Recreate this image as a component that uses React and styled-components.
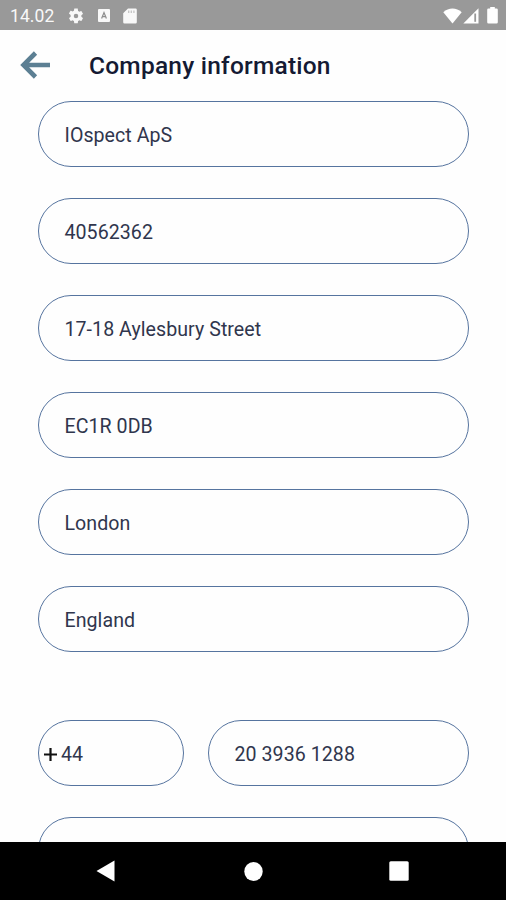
import styled, { createGlobalStyle } from "styled-components";

const GlobalStyle = createGlobalStyle`
  * {
    box-sizing: border-box;
  }
  body {
    margin: 0;
    background: #fefefe;
    font-family: Roboto, sans-serif;
  }
`;

const Screen = styled.div`
  display: flex;
  flex-direction: column;
  width: 506px;
  height: 900px;
  overflow: hidden;
  background: #fefefe;
`;

/* Status bar */
const StatusBar = styled.header`
  display: flex;
  flex: none;
  align-items: center;
  justify-content: space-between;
  height: 30px;
  padding: 1px 8px 0 10px;
  background: #999999;
  color: #f8f8f8;
`;
const StatusGroup = styled.div`
  display: flex;
  align-items: center;
  gap: ${({ $gap }) => $gap}px;
`;
const Clock = styled.span`
  width: 44px;
  font-size: 17.5px;
  line-height: 20px;
  letter-spacing: 0.1px;
`;

/* App bar */
const AppBar = styled.div`
  display: flex;
  flex: none;
  align-items: center;
  height: 71px;
  padding-left: 20px;
`;
const BackButton = styled.button`
  display: flex;
  width: 69px;
  padding: 0 0 2px;
  border: 0;
  background: none;
`;
const Title = styled.h1`
  margin: 0;
  color: #141a33;
  font-size: 24.5px;
  font-weight: 500;
  line-height: 30px;
  letter-spacing: 0.22px;
`;

/* Form */
const Form = styled.main`
  flex: 1;
  min-height: 0;
  padding: 0 37px 0 38px;
  overflow: hidden;
`;
const Field = styled.div`
  display: flex;
  align-items: center;
  width: ${({ $width }) => $width || "100%"};
  height: 66px;
  margin-bottom: 31.1px;
  padding: 4px 0 0 ${({ $inset }) => $inset || "25.5px"};
  border: 1.3px solid #56749f;
  border-radius: 33px;
  color: #30364d;
  font-size: 19.6px;
  line-height: 24px;
  letter-spacing: 0.05px;
  white-space: nowrap;
`;
const PhoneRow = styled.div`
  display: flex;
  justify-content: space-between;
  margin-top: 67.6px;
`;
const Plus = styled.svg`
  margin: 0 4px 2px 0;
`;

/* Navigation bar */
const NavBar = styled.nav`
  display: flex;
  flex: none;
  align-items: center;
  justify-content: space-between;
  height: 58px;
  padding: 0 97px 0 96px;
  background: #000;
`;

const details = [
  "IOspect ApS",
  "40562362",
  "17-18 Aylesbury Street",
  "EC1R 0DB",
  "London",
  "England",
];

const GearIcon = () => (
  <svg width="18" height="18" viewBox="0 0 24 24" fill="currentColor">
    <path d="M19.14 12.94c.04-.3.06-.61.06-.94s-.02-.64-.07-.94l2.03-1.58a.49.49 0 0 0 .12-.61l-1.92-3.32a.49.49 0 0 0-.59-.22l-2.39.96a7 7 0 0 0-1.62-.94l-.36-2.54A.48.48 0 0 0 13.92 2h-3.84a.48.48 0 0 0-.47.41l-.36 2.54a7 7 0 0 0-1.62.94l-2.39-.96a.48.48 0 0 0-.59.22L2.74 8.47a.48.48 0 0 0 .12.61l2.03 1.58a6 6 0 0 0 0 2.28l-2.03 1.58a.49.49 0 0 0-.12.61l1.92 3.32c.12.22.37.29.59.22l2.39-.96c.5.38 1.03.7 1.62.94l.36 2.54c.05.24.24.41.48.41h3.84c.24 0 .44-.17.47-.41l.36-2.54a7 7 0 0 0 1.62-.94l2.39.96c.22.08.47 0 .59-.22l1.92-3.32a.48.48 0 0 0-.12-.61zM12 15a3 3 0 1 1 0-6 3 3 0 0 1 0 6z" />
  </svg>
);

const KeyboardIcon = () => (
  <svg width="12" height="13" viewBox="0 0 12 13">
    <rect width="12" height="13" rx="1" fill="#f8f8f8" />
    <path d="M3.6 9.5 6 3.6 8.4 9.5M4.5 7.7h3" fill="none" stroke="#8c8c8c" strokeWidth="1.2" />
  </svg>
);

const CardIcon = () => (
  <svg width="14" height="16" viewBox="0 0 14 16">
    <path d="M5 .5h7.5a1.3 1.3 0 0 1 1.3 1.3v12.4a1.3 1.3 0 0 1-1.3 1.3h-11a1.3 1.3 0 0 1-1.3-1.3V5.3z" fill="#f8f8f8" />
    <path d="M5.7 2.5V5M8.3 2.5V5M10.9 2.5V5" stroke="#c4c4c4" strokeWidth="1.3" />
  </svg>
);

const WifiIcon = () => (
  <svg width="19" height="16" viewBox="0 0 19 16">
    <path d="M.3 4.3C5.6-.7 13.4-.7 18.7 4.3L9.5 15.5z" fill="#fff" />
  </svg>
);

const SignalIcon = () => (
  <svg width="16" height="16" viewBox="0 0 16 16">
    <path d="M15.5.2v15.3H.3z" fill="#fff" />
    <path d="M12.2 5.5v8.3" stroke="#999" strokeWidth="1.8" />
  </svg>
);

const BatteryIcon = () => (
  <svg width="11" height="17" viewBox="0 0 11 17">
    <path d="M3.2 0h4.6v1.5h1.7a1.3 1.3 0 0 1 1.3 1.3v12.5a1.3 1.3 0 0 1-1.3 1.3h-8a1.3 1.3 0 0 1-1.3-1.3V2.8a1.3 1.3 0 0 1 1.3-1.3h1.7z" fill="#fff" />
  </svg>
);

const BackIcon = () => (
  <svg width="30" height="28" viewBox="0 0 30 28">
    <path d="M30 14H4M15.5 2 3.5 14l12 12" fill="none" stroke="#5c7f93" strokeWidth="4.6" />
  </svg>
);

export default function App() {
  return (
    <Screen>
      <GlobalStyle />
      <StatusBar>
        <StatusGroup $gap={13}>
          <Clock>14.02</Clock>
          <GearIcon />
          <KeyboardIcon />
          <CardIcon />
        </StatusGroup>
        <StatusGroup $gap={8}>
          <StatusGroup $gap={1}>
            <WifiIcon />
            <SignalIcon />
          </StatusGroup>
          <BatteryIcon />
        </StatusGroup>
      </StatusBar>
      <AppBar>
        <BackButton aria-label="Back">
          <BackIcon />
        </BackButton>
        <Title>Company information</Title>
      </AppBar>
      <Form>
        {details.map((value) => (
          <Field key={value}>{value}</Field>
        ))}
        <PhoneRow>
          <Field $width="146px" $inset="5px">
            <Plus width="13" height="13" viewBox="0 0 13 13">
              <path d="M6.5 0v13M0 6.5h13" stroke="#111" strokeWidth="2.2" />
            </Plus>
            44
          </Field>
          <Field $width="261px">20 3936 1288</Field>
        </PhoneRow>
        <Field />
      </Form>
      <NavBar>
        <svg width="19" height="22" viewBox="0 0 19 22">
          <path d="M18.5.5v21L.5 11z" fill="#fff" />
        </svg>
        <svg width="21" height="19" viewBox="0 0 21 19">
          <ellipse cx="11.5" cy="9.5" rx="9.2" ry="9.4" fill="#fff" />
        </svg>
        <svg width="20" height="20" viewBox="0 0 20 20">
          <rect x=".3" y=".3" width="19.4" height="19.4" rx="1.5" fill="#fff" />
        </svg>
      </NavBar>
    </Screen>
  );
}
